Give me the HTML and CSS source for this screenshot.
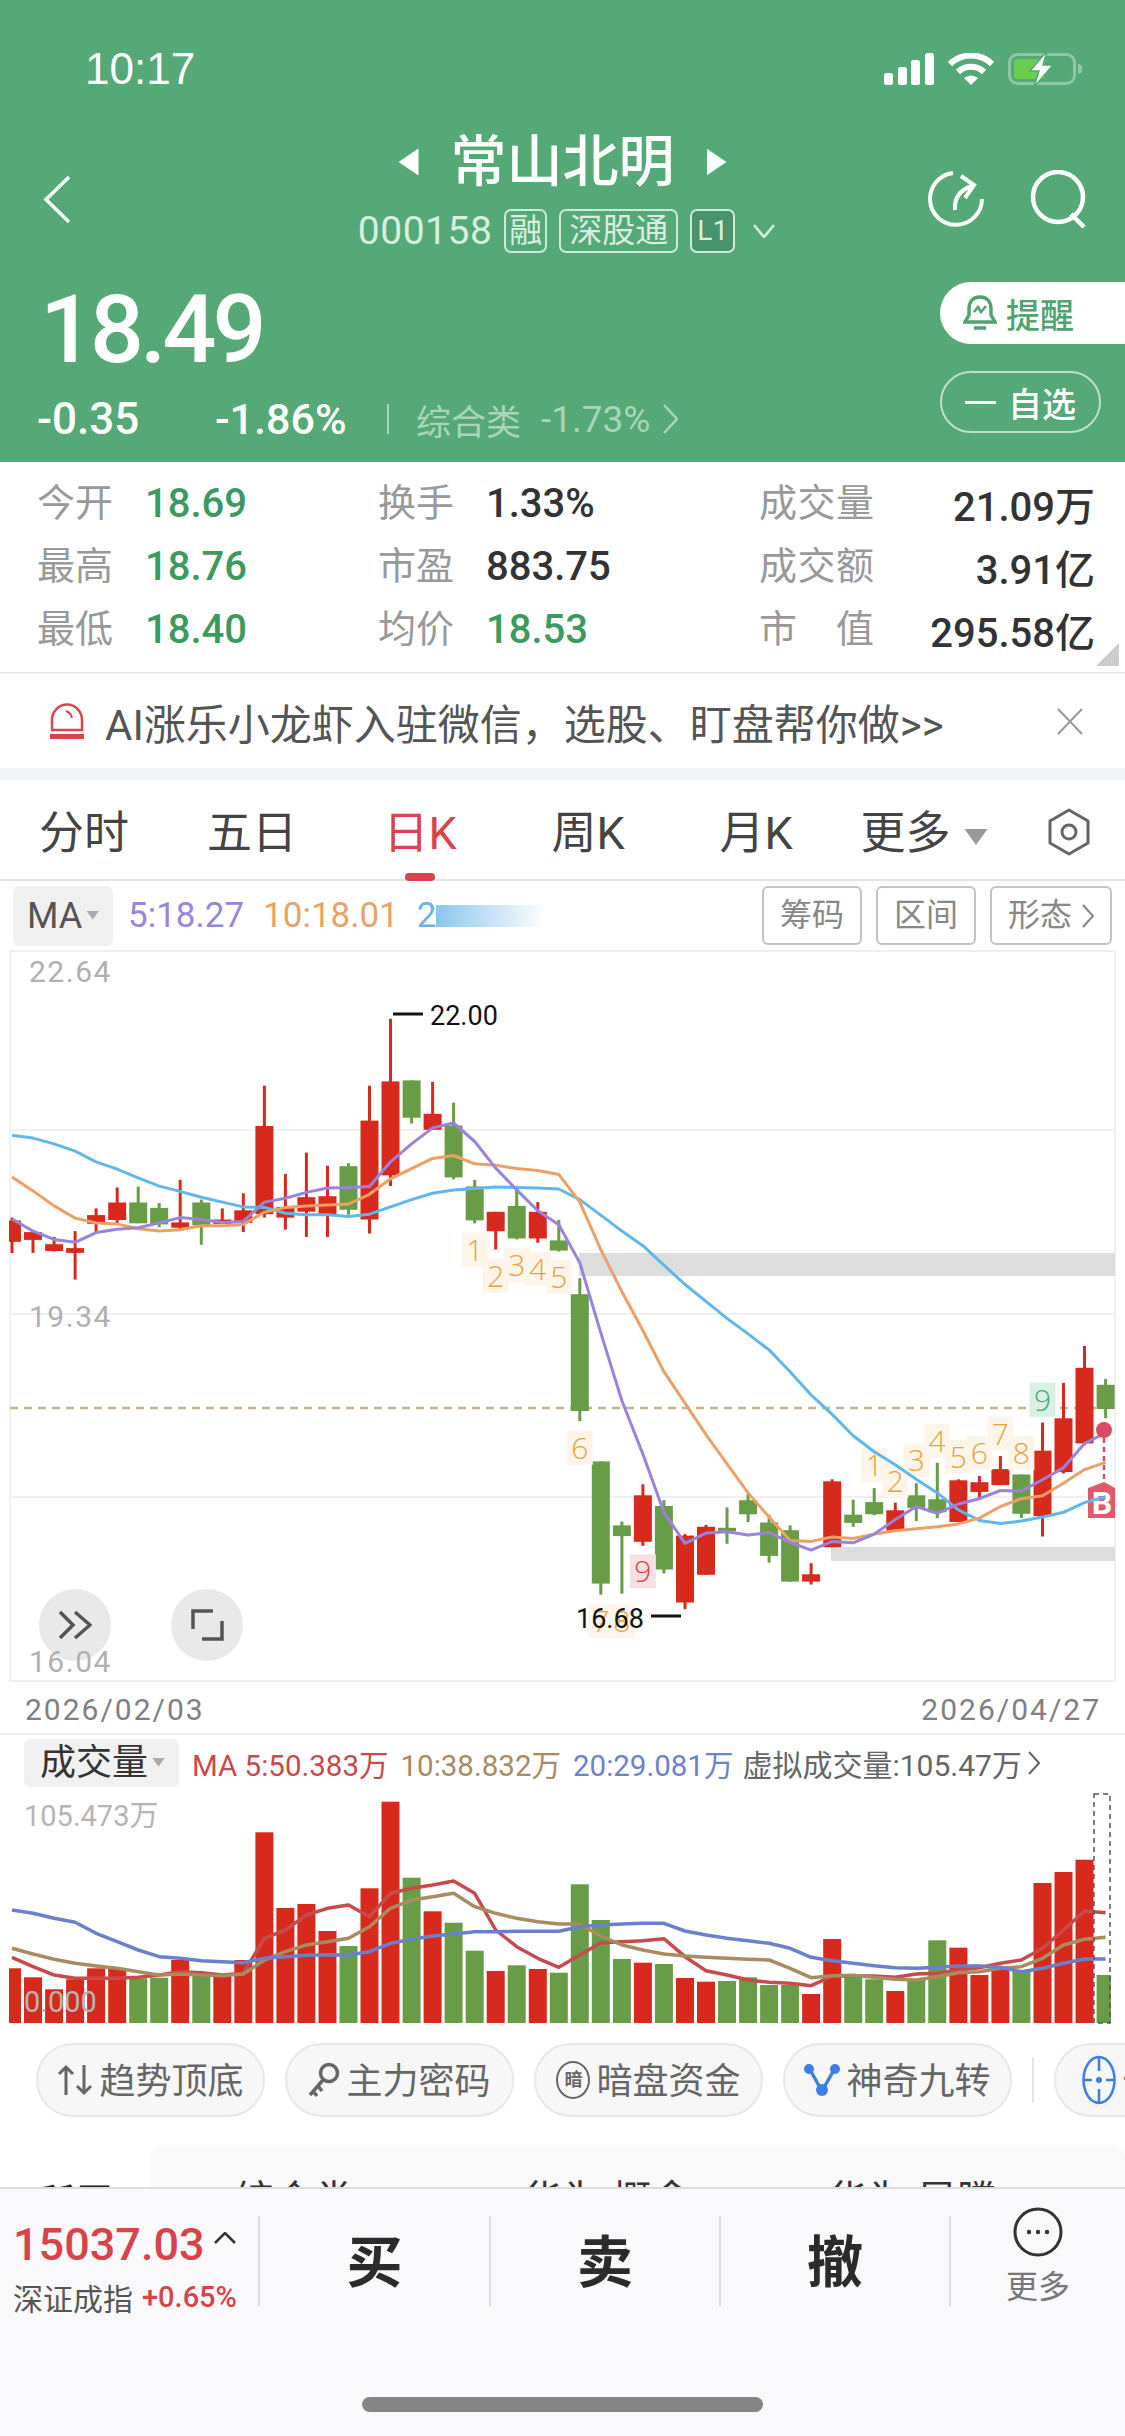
FILE: index.html
```html
<!DOCTYPE html>
<html lang="zh-CN">
<head>
    <meta charset="UTF-8">
    <meta name="viewport" content="width=device-width, initial-scale=1.0">
    <title>常山北明 000158</title>
    <link rel="stylesheet" href="styles.css">
</head>
<body>
    <div class="page">
        <div class="scroll">
            <!-- Quote header -->
            <div class="quote">
                <div class="status">
                    <span class="time">10:17</span>
                    <div class="status-icons">
                        <svg width="50" height="32" viewBox="0 0 50 32"><g fill="#fff"><rect x="0" y="20" width="9" height="12" rx="2.5"/><rect x="14" y="14" width="9" height="18" rx="2.5"/><rect x="27" y="7" width="9" height="25" rx="2.5"/><rect x="41" y="0" width="9" height="32" rx="2.5"/></g></svg>
                        <svg width="46" height="32" viewBox="0 0 46 32"><g fill="none" stroke="#fff" stroke-width="6"><path d="M2 11 A30 30 0 0 1 44 11"/><path d="M10 19 A19 19 0 0 1 36 19"/></g><path d="M16 25 Q23 20 30 25 L23 32 Z" fill="#fff"/></svg>
                        <svg width="74" height="36" viewBox="0 0 74 36"><rect x="1.5" y="3.5" width="65" height="29" rx="8" fill="none" stroke="#fff" stroke-opacity=".35" stroke-width="3"/><rect x="6" y="8" width="31" height="20" rx="3" fill="#69cf4b"/><path d="M70 13 a5 5 0 0 1 0 10 z" fill="#fff" fill-opacity=".35"/><path d="M39 0 L22 20 H31 L26 36 L45 14 H35 Z" fill="#fff" stroke="#54a976" stroke-width="1.5"/></svg>
                    </div>
                </div>

                <div class="nav">
                    <svg class="back" width="28" height="49" viewBox="0 0 28 49"><path d="M26 2 L3 24.500 L26 47" fill="none" stroke="#fff" stroke-width="3.500"/></svg>
                    <div class="nav-title">
                        <div class="name-row">
                            <span class="tri tri-left"></span>
                            <h1>常山北明</h1>
                            <span class="tri tri-right"></span>
                        </div>
                        <div class="code-row">
                            <span class="code">000158</span>
                            <span class="tag tag-single">融</span>
                            <span class="tag">深股通</span>
                            <span class="tag tag-level">L1</span>
                            <svg class="code-more" width="22" height="14" viewBox="0 0 22 14"><path d="M1 1 L11 13 L21 1" fill="none" stroke="#d8eee0" stroke-width="2.500"/></svg>
                        </div>
                    </div>
                    <div class="nav-icons">
                        <svg width="58" height="58" viewBox="0 0 58 58"><g fill="none" stroke="#fff" stroke-width="4"><path d="M26 3 A26 26 0 1 0 55 29"/><path d="M28 40 C27 28 33 20 45 16"/><path d="M34 6 L47 15 L38 28"/></g></svg>
                        <svg width="58" height="58" viewBox="0 0 58 58"><g fill="none" stroke="#fff" stroke-width="4.500"><circle cx="28" cy="27" r="25"/><path d="M41 44 L54 57"/></g></svg>
                    </div>
                </div>

                <div class="quote-main">
                    <div class="price-block">
                        <div class="price">18.49</div>
                        <div class="change-row">
                            <span class="change">-0.35</span>
                            <span class="change change-pct">-1.86%</span>
                            <span class="change-sep"></span>
                            <span class="sector-name">综合类</span>
                            <span class="sector-pct">-1.73%</span>
                            <svg width="15" height="30" viewBox="0 0 15 30"><path d="M1 1 L14 15 L1 29" fill="none" stroke="#a9d6b9" stroke-width="2.500"/></svg>
                        </div>
                    </div>
                    <div class="quote-actions">
                        <div class="pill pill-alert">
                            <svg width="34" height="38" viewBox="0 0 34 38"><g fill="none" stroke="#4fa36f" stroke-width="3.500"><path d="M17 3 C9 3 6 9 6 15 V21 L2 28 H32 L28 21 V15 C28 9 25 3 17 3 Z"/><path d="M11 34 H23"/></g><path d="M11 18 L15 13 L18 18 L23 12" fill="none" stroke="#4fa36f" stroke-width="2.500"/></svg>
                            提醒
                        </div>
                        <div class="pill pill-watch"><span class="minus"></span>自选</div>
                    </div>
                </div>
            </div>

            <!-- Day stats -->
            <div class="stats">
                <div class="stat"><span class="stat-label">今开</span><span class="stat-value down">18.69</span></div>
                <div class="stat"><span class="stat-label">换手</span><span class="stat-value">1.33%</span></div>
                <div class="stat stat-wide"><span class="stat-label">成交量</span><span class="stat-value">21.09万</span></div>
                <div class="stat"><span class="stat-label">最高</span><span class="stat-value down">18.76</span></div>
                <div class="stat"><span class="stat-label">市盈</span><span class="stat-value">883.75</span></div>
                <div class="stat stat-wide"><span class="stat-label">成交额</span><span class="stat-value">3.91亿</span></div>
                <div class="stat"><span class="stat-label">最低</span><span class="stat-value down">18.40</span></div>
                <div class="stat"><span class="stat-label">均价</span><span class="stat-value down">18.53</span></div>
                <div class="stat stat-wide"><span class="stat-label">市 值</span><span class="stat-value">295.58亿</span></div>
                <span class="corner"></span>
            </div>

            <!-- Notice -->
            <div class="notice">
                <svg width="36" height="37" viewBox="0 0 36 37"><g fill="none" stroke="#d9434b"><path d="M3 27 V17 A15 15.500 0 0 1 33 17 V27 Z" stroke-width="2.500"/><path d="M17 8 Q22 10 23 15" stroke-width="2"/></g><rect x="1" y="31" width="34" height="5" fill="#d9434b"/></svg>
                <span class="notice-text">AI涨乐小龙虾入驻微信，选股、盯盘帮你做&gt;&gt;</span>
                <svg width="26" height="27" viewBox="0 0 26 27"><path d="M1 1 L25 26 M25 1 L1 26" fill="none" stroke="#999" stroke-width="2"/></svg>
            </div>
            <div class="gap"></div>

            <!-- Period tabs -->
            <div class="tabs">
                <span class="tab">分时</span>
                <span class="tab">五日</span>
                <span class="tab active">日K</span>
                <span class="tab">周K</span>
                <span class="tab">月K</span>
                <span class="tab">更多<i class="caret"></i></span>
                <svg width="44" height="48" viewBox="0 0 44 48"><g fill="none" stroke="#666" stroke-width="3"><path d="M22 2 L41 13 V35 L22 46 L3 35 V13 Z" stroke-linejoin="round"/><circle cx="22" cy="24" r="7"/></g></svg>
            </div>

            <!-- MA legend -->
            <div class="ma-row">
                <div class="ma-chip">MA<i class="mini-caret"></i></div>
                <span class="ma ma5">5:18.27</span>
                <span class="ma ma10">10:18.01</span>
                <span class="ma ma20">2</span>
                <span class="ma-fade"></span>
                <div class="ma-tools">
                    <span class="tool">筹码</span>
                    <span class="tool">区间</span>
                    <span class="tool tool-wide">形态<svg width="12" height="24" viewBox="0 0 12 24"><path d="M1 1 L11 12 L1 23" fill="none" stroke="#888" stroke-width="2"/></svg></span>
                </div>
            </div>

            <!-- Candles -->
            <div class="chart-wrap">
                <div class="round-btn btn-next">
                    <svg width="34" height="30" viewBox="0 0 34 30"><path d="M2 2 L15 15 L2 28 M17 2 L32 15 L17 28" fill="none" stroke="#555" stroke-width="3.500"/></svg>
                </div>
                <div class="round-btn btn-full">
                    <svg width="33" height="32" viewBox="0 0 33 32"><path d="M22 2 H2 V20 M11 30 H31 V12" fill="none" stroke="#555" stroke-width="3.500"/></svg>
                </div>
                <svg id="priceChart" class="chart" width="1125" height="732"></svg>
            </div>
            <div class="dates">
                <span>2026/02/03</span>
                <span>2026/04/27</span>
            </div>

            <!-- Volume -->
            <div class="vol-head">
                <div class="vol-chip">成交量<i class="mini-caret"></i></div>
                <span class="vol-ma v5">MA 5:50.383万</span>
                <span class="vol-ma v10">10:38.832万</span>
                <span class="vol-ma v20">20:29.081万</span>
                <span class="vol-ma vv">虚拟成交量:105.47万</span>
                <svg width="12" height="24" viewBox="0 0 12 24"><path d="M1 1 L11 12 L1 23" fill="none" stroke="#666" stroke-width="2"/></svg>
            </div>
            <svg id="volumeChart" class="chart" width="1125" height="235"></svg>

            <!-- Indicator chips -->
            <div class="chips">
                <div class="chip">
                    <svg width="36" height="32" viewBox="0 0 36 32"><path d="M9 31 V3 M2 10 L9 3 L16 10 M27 1 V29 M20 22 L27 29 L34 22" fill="none" stroke="#666" stroke-width="3"/></svg>
                    <span>趋势顶底</span>
                </div>
                <div class="chip">
                    <svg width="32" height="36" viewBox="0 0 32 36"><g fill="none" stroke="#666" stroke-width="3.500"><circle cx="21" cy="11" r="8.500"/><path d="M15 18 L2 33 M5 29 L9 34 M10 24 L14 29"/></g></svg>
                    <span>主力密码</span>
                </div>
                <div class="chip">
                    <i class="dark-pool">暗</i>
                    <span>暗盘资金</span>
                </div>
                <div class="chip">
                    <svg width="36" height="34" viewBox="0 0 36 34"><path d="M5 5 L18 28 L31 5" fill="none" stroke="#3d7ee6" stroke-width="3.500"/><g fill="#3d7ee6"><circle cx="5" cy="6" r="5"/><circle cx="31" cy="6" r="5"/><circle cx="18" cy="27" r="6"/></g></svg>
                    <span>神奇九转</span>
                </div>
                <i class="chip-sep"></i>
                <div class="chip">
                    <svg width="34" height="50" viewBox="0 0 34 50"><g fill="none" stroke="#3d7ee6" stroke-width="2.500"><ellipse cx="17" cy="25" rx="15.500" ry="23"/><path d="M17 2 V16 M17 34 V48 M1 25 H10 M24 25 H33"/></g><circle cx="17" cy="25" r="3" fill="#3d7ee6"/></svg>
                    <span>十字光标</span>
                </div>
            </div>

            <!-- Related sectors, cut off by the trade bar -->
            <div class="sectors">
                <span class="sectors-label">所属</span>
                <div class="sectors-panel">
                    <span>综合类</span>
                    <span>华为 概念</span>
                    <span>华为 昇腾</span>
                </div>
            </div>
        </div>

        <!-- Trade bar -->
        <div class="tradebar">
            <div class="trade-row">
                <div class="index">
                    <div class="index-value">15037.03<svg width="22" height="12" viewBox="0 0 22 12"><path d="M1 11 L11 1 L21 11" fill="none" stroke="#333" stroke-width="2.500"/></svg></div>
                    <div class="index-info"><span>深证成指</span><span class="index-pct">+0.65%</span></div>
                </div>
                <div class="trade-btn">买</div>
                <div class="trade-btn">卖</div>
                <div class="trade-btn">撤</div>
                <div class="trade-more">
                    <svg width="50" height="50" viewBox="0 0 50 50"><circle cx="25" cy="25" r="23" fill="none" stroke="#333" stroke-width="3"/><g fill="#333"><circle cx="16" cy="25" r="2.200"/><circle cx="25" cy="25" r="2.200"/><circle cx="34" cy="25" r="2.200"/></g></svg>
                    <span>更多</span>
                </div>
            </div>
            <div class="home-bar"></div>
        </div>
    </div>

    <script src="chart.js"></script>
</body>
</html>
```

FILE: styles.css
```css
* { margin: 0; padding: 0; box-sizing: border-box; }

body {
    font-family: Roboto, "Noto Sans CJK SC", sans-serif;
    background: #fff;
    color: #333;
}

.page {
    width: 1125px;
    height: 2436px;
    overflow: hidden;
}

.scroll {
    height: 2187px;
    overflow: hidden;
}

/* Header */
.quote {
    height: 462px;
    background: #54a976;
    color: #fff;
}

.status {
    height: 122px;
    padding: 50px 43px 0 85px;
    display: flex;
    justify-content: space-between;
    align-items: flex-start;
}

.time {
    font-family: "Liberation Sans", sans-serif;
    font-size: 44px;
    line-height: 38px;
    font-weight: 500;
}

.status-icons {
    display: flex;
    align-items: center;
    gap: 14px;
    margin-top: 1px;
}

.nav {
    height: 140px;
    display: grid;
    grid-template-columns: 1fr auto 1fr;
}

.back {
    margin: 53px 0 0 43px;
}

.name-row {
    display: flex;
    align-items: center;
    justify-content: center;
    gap: 32px;
    height: 80px;
}

.name-row h1 {
    font-size: 56px;
    font-weight: 500;
    line-height: 80px;
}

.tri {
    width: 20px;
    height: 27px;
    background: #fff;
}

.tri-left { clip-path: polygon(100% 0, 100% 100%, 0 50%); }
.tri-right { clip-path: polygon(0 0, 0 100%, 100% 50%); }

.code-row {
    display: flex;
    align-items: center;
    gap: 12px;
    height: 44px;
    margin: 7px 0 0 8px;
    color: #d8eee0;
}

.code {
    font-size: 39px;
    letter-spacing: 0.5px;
}

.tag {
    height: 44px;
    padding: 0 8px;
    border: 2px solid #cfe8d8;
    border-radius: 7px;
    font-size: 33px;
    line-height: 39px;
    white-space: nowrap;
}

.tag-single {
    padding: 0 3px;
}

.tag-level {
    background: #47936a;
    font-size: 28px;
    padding: 0 5px;
}

.code-more {
    margin-left: 6px;
}

.nav-icons {
    display: flex;
    justify-content: flex-end;
    gap: 45px;
    padding: 48px 37px 0 0;
    align-items: flex-start;
}

.quote-main {
    height: 200px;
    padding-top: 20px;
    display: flex;
    justify-content: space-between;
}

.price {
    margin: 3px 0 0 40px;
    font-size: 95px;
    line-height: 90px;
    font-weight: 500;
    letter-spacing: -4px;
}

.change-row {
    display: flex;
    align-items: center;
    height: 44px;
    margin: 22px 0 0 37px;
}

.change {
    font-size: 44px;
    font-weight: 500;
    width: 178px;
}

.change-pct {
    font-size: 43px;
    width: 172px;
}

.change-sep {
    width: 2px;
    height: 30px;
    background: #a9d6b9;
    margin-right: 27px;
}

.sector-name {
    font-size: 35px;
    color: #a9d6b9;
    width: 125px;
}

.sector-pct {
    font-size: 37px;
    color: #a9d6b9;
    width: 122px;
}

.quote-actions {
    width: 185px;
    display: flex;
    flex-direction: column;
    gap: 27px;
}

.pill {
    height: 62px;
    display: flex;
    align-items: center;
    font-size: 34px;
    font-weight: 500;
}

.pill-alert {
    background: #fff;
    color: #4fa36f;
    border-radius: 31px 0 0 31px;
    padding-left: 23px;
    gap: 9px;
}

.pill-watch {
    width: 161px;
    border: 2px solid #bfe0cc;
    border-radius: 31px;
    padding-left: 23px;
    gap: 12px;
}

.minus {
    width: 31px;
    height: 3px;
    background: #fff;
}

/* Stats */
.stats {
    position: relative;
    height: 212px;
    padding: 10px 0 0 37px;
    display: grid;
    grid-template-columns: 341px 381px 336px;
    grid-auto-rows: 63px;
    border-bottom: 2px solid #e9e9e9;
}

.stat {
    display: flex;
    align-items: center;
}

.stat-label {
    width: 108px;
    margin-bottom: 9px;
    font-size: 38px;
    color: #999;
}

.stat-value {
    font-size: 40px;
    font-weight: 500;
    white-space: nowrap;
}

.stat-wide .stat-label {
    width: 115px;
    text-align-last: justify;
}

.stat-wide .stat-value {
    margin-left: auto;
}

.down { color: #3c9a5f; }

.corner {
    position: absolute;
    right: 6px;
    bottom: 6px;
    width: 23px;
    height: 23px;
    background: #ccc;
    clip-path: polygon(100% 0, 100% 100%, 0 100%);
}

/* Notice */
.notice {
    height: 94px;
    display: flex;
    align-items: center;
    padding: 0 42px 0 49px;
    gap: 20px;
}

.notice-text {
    flex: 1;
    font-size: 42px;
    color: #555;
    white-space: nowrap;
}

.gap {
    height: 12px;
    background: #f3f4f6;
}

/* Tabs */
.tabs {
    height: 101px;
    display: grid;
    grid-template-columns: repeat(6, 168px) auto;
    align-items: center;
    border-bottom: 2px solid #e3e3e3;
}

.tab {
    position: relative;
    padding-top: 4px;
    text-align: center;
    font-size: 45px;
    line-height: 99px;
    color: #444;
    white-space: nowrap;
}

.tab.active {
    color: #d9434b;
}

.tab.active::after {
    content: "";
    position: absolute;
    left: 69px;
    bottom: 2px;
    width: 30px;
    height: 8px;
    background: #d9434b;
    border-radius: 4px;
}

.caret {
    display: inline-block;
    margin-left: 14px;
    width: 23px;
    height: 16px;
    background: #999;
    clip-path: polygon(0 0, 100% 0, 50% 100%);
    vertical-align: 4px;
}

.tabs svg {
    margin-left: 39px;
}

/* MA legend */
.ma-row {
    height: 69px;
    display: flex;
    align-items: center;
    padding: 0 13px;
}

.ma-chip {
    width: 100px;
    height: 60px;
    background: #f0f0f0;
    border-radius: 6px;
    padding-left: 14px;
    font-size: 36px;
    line-height: 60px;
    color: #555;
}

.mini-caret {
    display: inline-block;
    margin-left: 4px;
    width: 13px;
    height: 9px;
    background: #aaa;
    clip-path: polygon(0 0, 100% 0, 50% 100%);
    vertical-align: 8px;
}

.ma {
    font-size: 35px;
    white-space: nowrap;
}

.ma5 { color: #9a86d8; margin-left: 15px; }
.ma10 { color: #e8a367; margin-left: 19px; }
.ma20 { color: #66b6e8; margin-left: 18px; }

.ma-fade {
    width: 110px;
    height: 22px;
    background: linear-gradient(90deg, #8cc6ee, #fff);
}

.ma-tools {
    display: flex;
    gap: 14px;
    margin-left: auto;
}

.tool {
    width: 100px;
    height: 59px;
    border: 2px solid #c4c4c4;
    border-radius: 6px;
    font-size: 32px;
    line-height: 55px;
    color: #888;
    text-align: center;
}

.tool-wide {
    width: 122px;
}

.tool-wide svg {
    margin-left: 10px;
    vertical-align: -2px;
}

/* Charts */
.chart {
    display: block;
}

.chart-wrap {
    position: relative;
}

/* the axis text stays readable over the buttons */
.chart-wrap .chart {
    position: relative;
}

.round-btn {
    position: absolute;
    top: 639px;
    width: 72px;
    height: 72px;
    border-radius: 50%;
    background: #e9e9e9;
    display: flex;
    align-items: center;
    justify-content: center;
}

.btn-next { left: 39px; }
.btn-full { left: 171px; }

.grid { stroke: #f0f0f0; stroke-width: 2; }
.band { fill: #dddddd; }
.last-price { stroke: #c9b38f; stroke-width: 2.500; stroke-dasharray: 8 6; }
.up { fill: #d82a1c; }
.dn { fill: #699c47; }
.line { fill: none; stroke-width: 3; stroke-linejoin: round; }
.l-purple { stroke: #9b82dc; }
.l-orange { stroke: #eda066; }
.l-blue { stroke: #5fb7ec; }
.l-vred { stroke: #c74b4b; stroke-width: 3.500; }
.l-vtan { stroke: #a88c5f; stroke-width: 3.500; }
.l-vblue { stroke: #6a80cc; stroke-width: 3.500; }

.axis-text {
    font-size: 30px;
    letter-spacing: 1.500px;
    fill: #b0b0b0;
}

.extreme-text {
    font-size: 27px;
    fill: #111;
}

.extreme-line {
    stroke: #111;
    stroke-width: 3;
}

.td-box { fill: #fdf5e9; }
.td-text {
    font-family: "Open Sans", sans-serif;
    font-size: 30px;
    font-weight: 300;
    fill: #e6a43c;
    text-anchor: middle;
}

.td-box.sell { fill: #f9dfe2; }
.td-text.sell { fill: #d9434b; }
.td-box.buy { fill: #d8efe3; }
.td-text.buy { fill: #3faa77; }

.b-mark { fill: #e05a6c; }
.b-dot { fill: #dc4a66; }
.b-link { stroke: #dc4a66; stroke-width: 2.500; stroke-dasharray: 5 4; }
.b-text {
    font-size: 32px;
    font-weight: 700;
    fill: #fff;
    text-anchor: middle;
}

.dates {
    height: 53px;
    display: flex;
    justify-content: space-between;
    align-items: center;
    padding: 3px 24px 0 25px;
    font-size: 30px;
    letter-spacing: 2px;
    color: #808080;
    border-bottom: 2px solid #eee;
}

.vol-head {
    height: 55px;
    display: flex;
    align-items: center;
    padding: 0 0 0 24px;
    white-space: nowrap;
}

.vol-chip {
    width: 155px;
    height: 48px;
    background: #f1f1f1;
    border-radius: 6px;
    padding-left: 16px;
    font-size: 36px;
    line-height: 48px;
    color: #333;
    margin-right: 13px;
}

.vol-ma {
    font-size: 29.500px;
    margin-right: 12px;
}

.v5 { color: #c94a4a; }
.v10 { color: #a88c5f; }
.v20 { color: #6c82d0; margin-right: 9px; }
.vv { color: #666; font-size: 30px; margin-right: 6px; }

.vol-text {
    font-size: 29px;
    fill: #b5b5b5;
}

.focus-box {
    fill: none;
    stroke: #555;
    stroke-width: 1.500;
    stroke-dasharray: 5 4;
}

/* Chips */
.chips {
    display: flex;
    align-items: center;
    gap: 20px;
    padding: 18px 0 0 36px;
    height: 92px;
    white-space: nowrap;
}

.chip {
    flex: none;
    width: 229px;
    height: 74px;
    display: flex;
    align-items: center;
    justify-content: center;
    gap: 6px;
    background: #f7f7f7;
    border: 2px solid #e8e8e8;
    border-radius: 37px;
    font-size: 36px;
    color: #666;
}

.chip span {
    margin-bottom: 4px;
}

.chip:last-child {
    justify-content: flex-start;
    padding-left: 26px;
}

.chip-sep {
    flex: none;
    width: 2px;
    height: 46px;
    background: #e3e3e3;
}

.dark-pool {
    width: 34px;
    height: 38px;
    border: 2px solid #666;
    border-radius: 50%;
    font-size: 18px;
    font-style: normal;
    line-height: 33px;
    text-align: center;
    font-weight: 700;
}

.sectors {
    display: flex;
    margin-top: 28px;
}

.sectors-label {
    width: 150px;
    padding: 27px 0 0 37px;
    font-size: 38px;
    font-weight: 700;
    color: #222;
}

.sectors-panel {
    flex: 1;
    height: 100px;
    background: #f9f9f9;
    border-radius: 14px;
    padding: 23px 0 0 84px;
    display: flex;
    font-size: 40px;
    color: #333;
}

.sectors-panel span:nth-child(1) { width: 288px; }
.sectors-panel span:nth-child(2) { width: 305px; }

/* Trade bar */
.tradebar {
    height: 249px;
    background: #f9f9fb;
    border-top: 2px solid #dcdcdc;
}

.trade-row {
    display: flex;
    height: 90px;
    margin-top: 27px;
}

.index {
    width: 258px;
    padding: 4px 0 0 13px;
    white-space: nowrap;
}

.index-value {
    font-size: 45px;
    font-weight: 500;
    line-height: 50px;
    color: #d8434a;
}

.index-value svg {
    margin-left: 9px;
    vertical-align: 16px;
}

.index-info {
    display: flex;
    align-items: center;
    gap: 9px;
    margin-top: 5px;
    font-size: 30px;
    color: #555;
}

.index-pct {
    font-size: 29px;
    font-weight: 500;
    color: #d8434a;
}

.trade-btn {
    width: 231px;
    border-left: 2px solid #ddd;
    font-size: 56px;
    font-weight: 700;
    line-height: 94px;
    color: #2b2b2b;
    text-align: center;
}

.trade-btn:nth-child(3) { width: 230px; }
.trade-btn:nth-child(4) { width: 230px; }

.trade-more {
    flex: 1;
    border-left: 2px solid #ddd;
    display: flex;
    flex-direction: column;
    align-items: center;
    font-size: 32px;
    color: #777;
}

.trade-more svg {
    margin-top: -9px;
}

.trade-more span {
    margin-top: 12px;
    line-height: 36px;
}

.home-bar {
    width: 401px;
    height: 15px;
    margin: 91px auto 0;
    background: #858585;
    border-radius: 8px;
}
```

FILE: chart.js
```js
// y values were read off the daily chart, so scale them to svg pixels here
const PRICE_SCALE = 2.063;
const py = z => (z / PRICE_SCALE).toFixed(1);
const vy = z => (z / 3 - 90).toFixed(1);
const barX = i => 12 + 21.03 * i;

// [colour, high, body top, body bottom, low]
const candles = [
    ['r',552,558,602,625],['r',582,582,598,625],['r',592,607,621,622],['r',580,615,625,680],
    ['r',533,547,565,584],['r',490,521,557,564],['g',488,521,564,564],['g',522,532,566,572],
    ['r',474,562,573,575],['g',515,521,568,608],['r',533,556,565,565],['r',502,537,563,582],
    ['r',280,363,545,552],['r',462,530,552,577],['r',418,510,540,592],['r',445,508,545,592],
    ['g',440,446,536,546],['r',280,352,556,585],['r',142,271,465,487],['g',269,269,346,358],
    ['r',272,338,371,371],['g',315,362,469,473],['g',474,488,558,564],['r',540,540,580,618],
    ['g',490,528,595,597],['r',520,540,595,604],['g',557,599,620,622],['g',677,710,951,972],
    ['g',1055,1055,1307,1330],['g',1179,1187,1209,1328],['r',1102,1125,1221,1229],['g',1135,1147,1278,1286],
    ['r',1205,1208,1346,1360],['r',1186,1190,1289,1289],['g',1150,1192,1199,1225],['g',1122,1135,1164,1180],
    ['g',1165,1181,1250,1264],['g',1187,1197,1303,1303],['r',1265,1288,1303,1309],['r',1092,1096,1232,1232],
    ['g',1134,1165,1182,1190],['g',1110,1139,1164,1166],['r',1140,1156,1198,1198],['g',1100,1125,1151,1178],
    ['g',1058,1133,1160,1172],['r',1092,1094,1180,1180],['r',1085,1098,1118,1130],['r',1044,1071,1104,1104],
    ['g',1082,1082,1163,1172],['r',975,1033,1168,1210],['r',893,966,1077,1080],['r',817,862,1018,1022],
    ['g',885,897,947,966]
];

const ma5 = [555,580,597,603,583,576,573,563,552,556,562,560,520,512,500,491,490,488,437,400,367,357,395,450,495,538,567,645,790,930,1040,1160,1224,1203,1200,1207,1202,1222,1238,1220,1223,1205,1175,1148,1162,1143,1132,1115,1116,1093,1068,1018,996];
const ma10 = [468,497,528,553,563,565,575,580,577,569,569,566,541,531,528,526,524,504,472,451,430,424,441,444,451,455,463,520,618,705,785,870,935,1000,1060,1120,1170,1218,1220,1211,1214,1205,1198,1194,1190,1184,1172,1148,1132,1126,1100,1072,1057];
const ma20 = [382,388,400,415,437,452,470,487,498,510,520,530,531,543,546,546,550,545,530,515,502,495,492,489,490,491,493,515,547,580,610,650,690,725,760,792,825,870,918,958,1002,1035,1062,1092,1120,1155,1177,1183,1178,1170,1160,1140,1128];

// nine-turn counters: [candle index, y, text, kind]
const turns = [
    [22,618,'1',''],[23,672,'2',''],[24,650,'3',''],[25,657,'4',''],[26,675,'5',''],[27,1027,'6',''],
    [28,1385,'7',''],[29,1385,'8',''],[30,1282,'9','sell'],
    [41,1063,'1',''],[42,1095,'2',''],[43,1052,'3',''],[44,1012,'4',''],[45,1045,'5',''],[46,1038,'6',''],
    [47,998,'7',''],[48,1038,'8',''],[49,928,'9','buy']
];

// [colour, top]
const volumes = [
    ['r',805],['r',832],['r',868],['r',838],['r',805],['r',805],['g',835],['g',833],['r',780],['g',820],
    ['r',825],['r',780],['r',397],['r',624],['r',612],['r',693],['g',738],['r',565],['r',305],['g',533],
    ['r',634],['g',668],['g',752],['r',813],['g',796],['r',807],['g',818],['g',553],['g',660],['g',777],
    ['r',788],['g',792],['r',834],['r',845],['g',843],['g',832],['g',855],['g',855],['r',882],['r',717],
    ['g',830],['g',838],['r',873],['g',840],['g',721],['r',743],['r',825],['r',800],['g',810],['r',549],
    ['r',516],['r',479],['g',825]
];

const volMa5 = [772,800,825,835,835,835,832,825,815,818,825,820,715,690,645,625,615,650,580,565,555,543,580,690,740,775,802,765,728,725,722,716,770,812,825,840,847,850,857,828,828,828,832,822,820,810,803,790,780,745,690,633,638];
const volMa10 = [745,762,778,790,798,805,815,825,822,825,827,822,780,755,735,725,715,680,625,600,590,580,620,640,655,665,672,672,708,735,750,762,768,772,775,778,780,805,833,827,826,832,838,840,830,818,815,805,800,775,735,718,712];
const volMa20 = [630,640,655,667,700,725,750,770,775,782,785,788,775,770,766,764,765,755,730,718,708,702,695,695,694,694,694,680,675,672,670,670,693,705,715,722,730,745,772,782,790,797,803,805,802,798,798,802,815,805,790,777,777];

function polyline(values, yFn, cls) {
    const pts = values.map((v, i) => barX(i).toFixed(1) + ',' + yFn(v)).join(' ');
    return `<polyline class="line ${cls}" points="${pts}"/>`;
}

function drawPriceChart() {
    let html = '<defs><clipPath id="priceClip"><rect x="9" y="0" width="1106" height="732"/></clipPath></defs>';

    // frame and grid
    [1, 180, 364, 547, 731].forEach(y => {
        html += `<line class="grid" x1="9" x2="1115" y1="${y}" y2="${y}"/>`;
    });
    html += '<line class="grid" x1="10" x2="10" y1="0" y2="732"/><line class="grid" x1="1115" x2="1115" y1="0" y2="732"/>';

    html += '<g clip-path="url(#priceClip)">';
    html += '<rect class="band" x="579" y="303" width="536" height="23"/>';
    html += '<rect class="band" x="831" y="597" width="284" height="14"/>';
    html += `<line class="last-price" x1="10" x2="1115" y1="${py(945)}" y2="${py(945)}"/>`;

    candles.forEach((c, i) => {
        const x = barX(i);
        const cls = c[0] === 'r' ? 'up' : 'dn';
        html += `<rect class="${cls}" x="${(x - 1.5).toFixed(1)}" y="${py(c[1])}" width="3" height="${py(c[4] - c[1])}"/>`;
        html += `<rect class="${cls}" x="${(x - 9).toFixed(1)}" y="${py(c[2])}" width="18" height="${py(c[3] - c[2])}"/>`;
    });

    turns.forEach(t => {
        const x = barX(t[0]);
        const y = t[1] / PRICE_SCALE;
        html += `<rect class="td-box ${t[3]}" x="${(x - 13).toFixed(1)}" y="${(y - 17).toFixed(1)}" width="26" height="34"/>`;
        html += `<text class="td-text ${t[3]}" x="${x.toFixed(1)}" y="${(y + 11).toFixed(1)}">${t[2]}</text>`;
    });

    // buy marker on the last candle
    html += '<line class="b-link" x1="1104" x2="1104" y1="488" y2="532"/>';
    html += '<path class="b-mark" d="M1088 538 L1104 532 L1115 538 V568 H1088 Z"/>';
    html += '<text class="b-text" x="1102" y="564">B</text>';

    html += polyline(ma20, py, 'l-blue');
    html += polyline(ma10, py, 'l-orange');
    html += polyline(ma5, py, 'l-purple');
    html += '<circle class="b-dot" cx="1104" cy="480" r="8"/>';
    html += '</g>';

    // axis prices
    html += '<text class="axis-text" x="29" y="32">22.64</text>';
    html += '<text class="axis-text" x="29" y="377">19.34</text>';
    html += '<text class="axis-text" x="29" y="722">16.04</text>';

    // high and low of the range
    html += '<line class="extreme-line" x1="393" x2="423" y1="64" y2="64"/>';
    html += '<text class="extreme-text" x="430" y="75">22.00</text>';
    html += '<line class="extreme-line" x1="651" x2="681" y1="666" y2="666"/>';
    html += '<text class="extreme-text" x="576" y="678">16.68</text>';

    document.getElementById('priceChart').innerHTML = html;
}

function drawVolumeChart() {
    const base = 233;
    let html = '';

    volumes.forEach((v, i) => {
        const cls = v[0] === 'r' ? 'up' : 'dn';
        const top = v[1] / 3 - 90;
        const left = Math.max(barX(i) - 9, 9);
        const right = Math.min(barX(i) + 9, 1111);
        html += `<rect class="${cls}" x="${left.toFixed(1)}" y="${top.toFixed(1)}" width="${(right - left).toFixed(1)}" height="${(base - top).toFixed(1)}"/>`;
    });

    html += polyline(volMa5, vy, 'l-vred');
    html += polyline(volMa10, vy, 'l-vtan');
    html += polyline(volMa20, vy, 'l-vblue');

    html += '<rect class="focus-box" x="1094" y="4" width="16" height="229"/>';
    html += '<text class="vol-text" x="24" y="36">105.473万</text>';
    html += '<text class="vol-text" x="24" y="222">0.000</text>';

    document.getElementById('volumeChart').innerHTML = html;
}

drawPriceChart();
drawVolumeChart();
```
